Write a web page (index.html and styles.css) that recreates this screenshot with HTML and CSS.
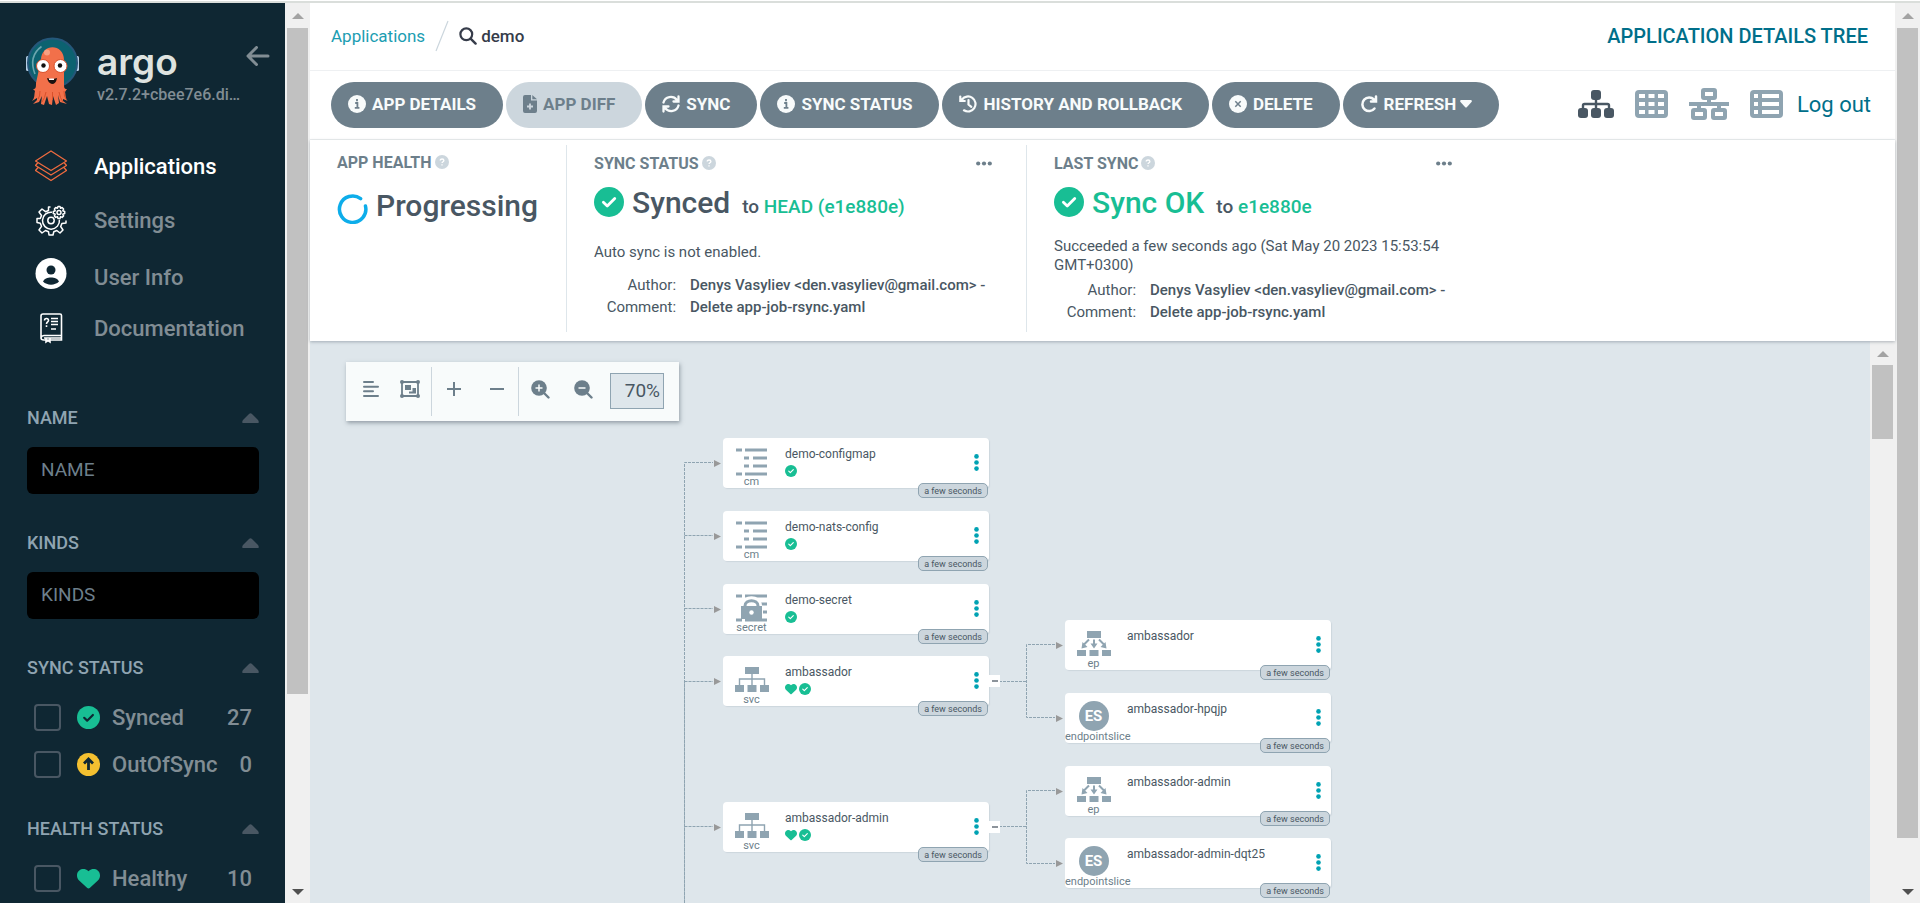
FILE: index.html
```html
<!DOCTYPE html>
<html lang="en">
<head>
<meta charset="utf-8">
<title>demo - Application Details Tree - Argo CD</title>
<link rel="stylesheet" href="styles.css">
</head>
<body>
<svg class="defs" aria-hidden="true">
  <symbol id="check" viewBox="0 0 512 512"><circle cx="256" cy="256" r="256" fill="#18be94"/><path d="M160 262l66 64 128-128" fill="none" stroke="var(--tick, #fff)" stroke-width="48" stroke-linecap="round" stroke-linejoin="round"/></symbol>
  <symbol id="heart" viewBox="0 0 512 512"><path fill="#18be94" d="M47.600 300.400l180.700 168.700c7.500 7 17.400 10.900 27.700 10.900s20.200-3.900 27.700-10.900l180.700-168.700c30.400-28.300 47.600-68 47.600-109.500v-5.800c0-69.900-50.500-129.500-119.400-141-45.600-7.600-92 7.300-124.600 39.900l-12 12-12-12c-32.600-32.600-79-47.500-124.600-39.900C50.500 55.600 0 115.200 0 185.100v5.800c0 41.500 17.200 81.200 47.600 109.500z"/></symbol>
  <symbol id="caret" viewBox="0 0 17 10"><path d="M1 10C0 10 0 8 1 7L7 1q1.500-1.400 3 0l6 6c1 1 1 3 0 3z" fill="currentColor"/></symbol>
  <symbol id="info" viewBox="0 0 18 18"><circle cx="9" cy="9" r="9" fill="currentColor"/><path d="M7.200 8h2.200v4.600M6.800 12.800h4.600M9 4v2.300" fill="none" stroke="#6d7f8b" stroke-width="1.800"/></symbol>
  <symbol id="help" viewBox="0 0 14 14"><circle cx="7" cy="7" r="7" fill="#ccd6dd"/><path d="M5.200 5.500c0-2 3.700-2 3.700 0 0 1.200-1.900 1.200-1.900 2.500M7 9.300v1.300" fill="none" stroke="#fff" stroke-width="1.300"/></symbol>
  <symbol id="dots" viewBox="0 0 16 5"><g fill="#6d7f8b"><circle cx="2.200" cy="2.500" r="2.100"/><circle cx="8" cy="2.500" r="2.100"/><circle cx="13.800" cy="2.500" r="2.100"/></g></symbol>
  <symbol id="kebab" viewBox="0 0 5 17"><g fill="#00a2b3"><circle cx="2.500" cy="2.400" r="2.300"/><circle cx="2.500" cy="8.500" r="2.300"/><circle cx="2.500" cy="14.600" r="2.300"/></g></symbol>
  <symbol id="cm" viewBox="0 0 34 28"><path d="M1 2h6M10 2h22M9 10h5M18 10h14M9 18h5M18 18h14M1 26h6M10 26h22" stroke="#8fa4b1" stroke-width="3"/></symbol>
  <symbol id="secret" viewBox="0 0 34 28"><path d="M1 2h6M10 2h22M26 10h6M28 18h4M1 26h6M10 26h22" stroke="#8fa4b1" stroke-width="3"/><path d="M9 13V12c0-9 15-9 15 0v1" fill="none" stroke="#fff" stroke-width="6"/><path d="M10 13V12c0-7 13-7 13 0v1" fill="none" stroke="#8fa4b1" stroke-width="3"/><path d="M6 12h21v13H6z" fill="#8fa4b1"/><circle cx="16.500" cy="18.500" r="2.200" fill="#fff"/></symbol>
  <symbol id="svc" viewBox="0 0 34 28"><g fill="#8fa4b1"><path d="M10 1h14v7H10zM0 19h9v7H0zM12.500 19h9v7h-9zM25 19h9v7h-9z"/><path d="M17 8v11M4.500 19v-6h25v6" fill="none" stroke="#8fa4b1" stroke-width="1.400"/></g></symbol>
  <symbol id="ep" viewBox="0 0 34 28"><g fill="#8fa4b1"><path d="M10 1h14v7H10zM0 20h9v6H0zM12.500 20h9v6h-9zM25 20h9v6h-9z"/><path d="M12 9.500l-5 5M17 9.500v5M22 9.500l5 5" stroke="#8fa4b1" stroke-width="2"/><path d="M4.500 18.500l1-6.500 5 5zM13.500 13.500h7L17 18.500zM29.500 18.500l-1-6.500-5 5z"/></g></symbol>
</svg>

<div class="app">
  <aside class="sidebar">
    <header class="brand">
      <svg class="mascot" viewBox="0 0 53 70" width="53" height="70" aria-hidden="true">
        <rect x="0" y="19" width="4" height="15" rx="1.500" fill="#b8cfe6"/><rect x="49" y="19" width="4" height="15" rx="1.500" fill="#b8cfe6"/>
        <circle cx="26.500" cy="26" r="24.500" fill="#0c6270" stroke="#25577a" stroke-width="2"/>
        <path d="M9 37C4 24 8 15 15.500 9.500" fill="none" stroke="#6ba5ae" stroke-width="1.600"/>
        <path fill="#f2704a" d="M15 23c0-17 23-17 23 0v22c0 6 0 7 3 7l-2 3c1 4 0 7 3 9l-5-2 0 2 4 3-7-2-2-7 1 8-3 2-3-9-1 9-3-1-2-8-3 9-3-1 1-8-3 6-6 2 4-4 0-2-5 3c3-3 2-6 3-10l-2-2c3 0 3-2 3-6z"/>
        <path d="M14 54q0 6-2 8M38 54q0 6 2 8M20 55q-1 6-4 10M33 55q1 6 4 10M26.500 55v8" stroke="#d9502a" stroke-width="1" fill="none"/>
        <ellipse cx="21" cy="15.500" rx="3" ry="3" fill="#f8a082"/>
        <circle cx="17" cy="29" r="6.500" fill="#fff" stroke="#d9502a"/><circle cx="34.500" cy="29" r="6.500" fill="#fff" stroke="#d9502a"/>
        <circle cx="17.500" cy="28.500" r="2.200" fill="#111"/><circle cx="34" cy="28.500" r="2.200" fill="#111"/>
        <path d="M21 41q5 2 10 0-1 6-5 6-4-1-5-6z" fill="#1a1210"/><path d="M23 41.500h5v1.500h-5z" fill="#fff"/>
      </svg>
      <div class="brand-text">
        <span class="wordmark">argo</span>
        <span class="version">v2.7.2+cbee7e6.di…</span>
      </div>
      <button class="collapse" aria-label="Collapse sidebar"><svg viewBox="0 0 24 20" width="24" height="20"><path d="M10.500 1.500L2 10l8.500 8.500M2.500 10H22" fill="none" stroke="currentColor" stroke-width="3" stroke-linecap="round" stroke-linejoin="round"/></svg></button>
    </header>
    <nav class="menu">
      <a class="menu-item active" href="#"><svg viewBox="0 0 32 32" width="32" height="32" fill="none" stroke="#ef6b3f" stroke-width="1.300" stroke-linejoin="round"><path d="M16 1l15.500 10L16 20.500.500 11zM3 12.500L.500 15.500 16 25l15.500-9.500-2.500-3M3 17.500l-2.500 3L16 30.500l15.500-10-2.500-3"/></svg>Applications</a>
      <a class="menu-item" href="#"><svg viewBox="0 0 32 32" width="32" height="32" fill="none" stroke="#fff" stroke-width="1.500" stroke-linejoin="round"><path d="M15.500 3h-2v3.500l-3 1.200L7 5 4 8l2.500 3.500-1.200 3H2v4l3.300.800 1.200 3L4 26l3 3 3.500-2.500 3 1.200.5 3.300h4l.8-3.300 3-1.200L25 29l3-3-2.300-3.500 1.200-3 4.100-.5v-2.500"/><path d="M17 8.200a8.500 8.500 0 1 0 7.400 7.400"/><circle cx="16" cy="16.500" r="3.200"/><circle cx="24" cy="8.500" r="2"/><path d="M23 2.500h2l.6 1.800 1.500-.8 1.500 1.500-.8 1.700 1.900.8v2l-1.900.7.800 1.700-1.500 1.500-1.500-.8-.6 1.900h-2l-.6-1.900-1.700.8-1.300-1.500.8-1.700-1.900-.7v-2l1.900-.8-.8-1.700 1.300-1.500 1.700.8z"/></svg>Settings</a>
      <a class="menu-item user" href="#"><svg viewBox="0 0 32 32" width="32" height="32"><circle cx="16" cy="15.500" r="15.500" fill="#fff"/><circle cx="16" cy="12" r="4.500" fill="#0f2733"/><path d="M8 23.500c2-5.500 14-5.500 16 0-4 4.200-12 4.200-16 0z" fill="#0f2733"/></svg>User Info</a>
      <a class="menu-item docs" href="#"><svg viewBox="0 0 32 32" width="32" height="32" fill="none" stroke="#fff" stroke-width="1.600"><path d="M6 25.500V4q0-2 2-2h17q1.500 0 1.500 1.500v20H9q-3 .5-3 2.500 0 2 3 2h17.500v-4.500M11 26v4l2-1.500L15 30v-4M9 26h17"/><path d="M9.500 8.500c0-3 4-2.500 4 0 0 1.500-2 1.500-2 3.500m0 1.200V15M16 6.500h7M16 9.500h7M16 12.500h7M16 17h5"/></svg>Documentation</a>
    </nav>
    <section class="filter">
      <h2><label for="f-name">NAME</label><svg width="17" height="10"><use href="#caret"/></svg></h2>
      <input class="filter-input" id="f-name" type="text" placeholder="NAME">
    </section>
    <section class="filter">
      <h2><label for="f-kinds">KINDS</label><svg width="17" height="10"><use href="#caret"/></svg></h2>
      <input class="filter-input" id="f-kinds" type="text" placeholder="KINDS">
    </section>
    <section class="filter checks">
      <h2>SYNC STATUS<svg width="17" height="10"><use href="#caret"/></svg></h2>
      <label class="check-row"><input type="checkbox"><svg class="dark-tick" width="23" height="23"><use href="#check"/></svg><span>Synced</span><b>27</b></label>
      <label class="check-row"><input type="checkbox"><svg viewBox="0 0 23 23" width="23" height="23"><circle cx="11.500" cy="11.500" r="11.500" fill="#f4c030"/><path d="M11.500 17V7M7 10.500L11.500 6l4.500 4.500" fill="none" stroke="#0f2733" stroke-width="2.800"/></svg><span>OutOfSync</span><b>0</b></label>
    </section>
    <section class="filter checks health">
      <h2>HEALTH STATUS<svg width="17" height="10"><use href="#caret"/></svg></h2>
      <label class="check-row"><input type="checkbox"><svg width="23" height="23"><use href="#heart"/></svg><span>Healthy</span><b>10</b></label>
    </section>
  </aside>
  <div class="bar left-bar"><i class="up"></i><div class="thumb"></div><i class="down"></i></div>

  <main class="page">
    <div class="topbar">
      <nav class="crumbs"><a href="#">Applications</a><svg viewBox="0 0 14 32" width="14" height="32"><path d="M1 31L13 1" stroke="#ccd6dd" stroke-width="1.200"/></svg><svg viewBox="0 0 18 18" width="18" height="18"><circle cx="7.300" cy="7.300" r="5.900" fill="none" stroke="#363c4a" stroke-width="2.200"/><path d="M11.600 11.600l5 5" stroke="#363c4a" stroke-width="2.400" stroke-linecap="round"/></svg><span>demo</span></nav>
      <span class="page-title">APPLICATION DETAILS TREE</span>
    </div>
    <div class="actions">
      <button class="pill"><svg width="18" height="18"><use href="#info"/></svg>APP DETAILS</button>
      <button class="pill off" disabled><svg viewBox="0 0 14 18" width="14" height="18"><path d="M2 0h6v5.500h6V16q0 2-2 2H2q-2 0-2-2V2Q0 0 2 0z" fill="currentColor"/><path d="M9.300 0v4.300H14z" fill="currentColor"/><path d="M7 8.500v6M4 11.500h6" stroke="#ccd6dd" stroke-width="1.800"/></svg>APP DIFF</button>
      <button class="pill"><svg viewBox="0 0 18 18" width="18" height="18" fill="none" stroke="currentColor" stroke-width="2.300" stroke-linecap="round"><path d="M1.500 7.500C3 1.500 11 0 15 5M16.500 10.500C15 16.500 7 18 3 13M16.500 1.500v5h-5M1.500 16.500v-5h5"/></svg>SYNC</button>
      <button class="pill"><svg width="18" height="18"><use href="#info"/></svg>SYNC STATUS</button>
      <button class="pill"><svg viewBox="0 0 18 18" width="18" height="18" fill="none" stroke="currentColor" stroke-width="2.200" stroke-linecap="round"><path d="M3 4.500A7.500 7.500 0 1 1 5 15.300M1.300 1.500v4.500h4.500M9.500 5v4.500l2.800 2.300"/></svg>HISTORY AND ROLLBACK</button>
      <button class="pill"><svg viewBox="0 0 18 18" width="18" height="18"><circle cx="9" cy="9" r="9" fill="currentColor"/><path d="M6.300 6.300l5.400 5.400M11.700 6.300l-5.400 5.400" stroke="#6d7f8b" stroke-width="1.500"/></svg>DELETE</button>
      <button class="pill refresh"><svg viewBox="0 0 18 18" width="18" height="18" fill="none" stroke="currentColor" stroke-width="2.500" stroke-linecap="round"><path d="M14.500 13.500A6.800 6.800 0 1 1 14 4.500l1.500 1.500M16 1.500v5h-5"/></svg>REFRESH<svg class="drop" viewBox="0 0 12 8" width="12" height="8"><path d="M1 0h10q1.500.5.500 2L7 7Q6 8 5 7L.500 2Q-.500.500 1 0z" fill="currentColor"/></svg></button>
      <div class="views">
        <a href="#" aria-label="Tree"><svg viewBox="0 0 36 28" width="36" height="28" fill="#495763"><rect x="13" y="0" width="10" height="10" rx="3"/><rect x="0" y="18" width="10" height="10" rx="3"/><rect x="13" y="18" width="10" height="10" rx="3"/><rect x="26" y="18" width="10" height="10" rx="3"/><path d="M18 9v10M5 19v-3.500q0-1.500 1.500-1.500h23q1.500 0 1.500 1.500V19" fill="none" stroke="#495763" stroke-width="2.400"/></svg></a>
        <a href="#" aria-label="Pods"><svg viewBox="0 0 33 28" width="33" height="28"><rect width="33" height="28" rx="4" fill="#8fa4b1"/><path d="M4 4h6v4H4zM13.500 4h6v4h-6zM23 4h6v4h-6zM4 12h6v4H4zM13.500 12h6v4h-6zM23 12h6v4h-6zM4 20h6v4H4zM13.500 20h6v4h-6zM23 20h6v4h-6z" fill="#fff"/></svg></a>
        <a href="#" aria-label="Network"><svg viewBox="0 0 40 32" width="40" height="32" fill="none" stroke="#8fa4b1" stroke-width="4"><path d="M0 16h40M20 11v5M10 16v5M30 16v5"/><rect x="14" y="2" width="12" height="8" rx="1"/><rect x="4" y="22" width="12" height="8" rx="1"/><rect x="24" y="22" width="12" height="8" rx="1"/></svg></a>
        <a href="#" aria-label="List"><svg viewBox="0 0 33 28" width="33" height="28"><rect width="33" height="28" rx="4" fill="#8fa4b1"/><path d="M4 4h4v4H4zM12 4h17v4H12zM4 12h4v4H4zM12 12h17v4H12zM4 20h4v4H4zM12 20h17v4H12z" fill="#fff"/></svg></a>
        <a class="logout" href="#">Log out</a>
      </div>
    </div>
    <div class="status">
      <section class="panel">
        <h3>APP HEALTH<svg width="14" height="14"><use href="#help"/></svg></h3>
        <div class="state low"><svg viewBox="0 0 31 31" width="31" height="31"><path d="M21 4A13.200 13.200 0 1 0 27.500 10" fill="none" stroke="#0dadea" stroke-width="3.500" stroke-linecap="round" transform="rotate(14 15.500 15.500)"/></svg><strong>Progressing</strong></div>
      </section>
      <section class="panel wide">
        <h3>SYNC STATUS<svg width="14" height="14"><use href="#help"/></svg><button class="more" aria-label="More"><svg width="16" height="5"><use href="#dots"/></svg></button></h3>
        <div class="state"><svg width="30" height="30"><use href="#check"/></svg><strong>Synced</strong><span>to <a href="#">HEAD (e1e880e)</a></span></div>
        <p class="note spaced">Auto sync is not enabled.</p>
        <dl><dt>Author:</dt><dd>Denys Vasyliev &lt;den.vasyliev@gmail.com&gt; -</dd><dt>Comment:</dt><dd>Delete app-job-rsync.yaml</dd></dl>
      </section>
      <section class="panel wide">
        <h3>LAST SYNC<svg width="14" height="14"><use href="#help"/></svg><button class="more" aria-label="More"><svg width="16" height="5"><use href="#dots"/></svg></button></h3>
        <div class="state"><svg width="30" height="30"><use href="#check"/></svg><strong class="ok">Sync OK</strong><span>to <a href="#">e1e880e</a></span></div>
        <p class="note">Succeeded a few seconds ago (Sat May 20 2023 15:53:54 GMT+0300)</p>
        <dl><dt>Author:</dt><dd>Denys Vasyliev &lt;den.vasyliev@gmail.com&gt; -</dd><dt>Comment:</dt><dd>Delete app-job-rsync.yaml</dd></dl>
      </section>
    </div>
    <div class="tree">
      <div class="canvas">
        <div class="tools">
          <div class="tool-group"><button aria-label="Align"><svg viewBox="0 0 16 16" width="16" height="16"><path d="M1 1h9M1 5.700h14M1 10.300h9M1 15h14" stroke="currentColor" stroke-width="2" stroke-linecap="round"/></svg></button><button aria-label="Group nodes"><svg viewBox="0 0 20 18" width="20" height="18" fill="currentColor"><path d="M2 2h16v14H2z" fill="none" stroke="currentColor" stroke-width="1.800"/><circle cx="2" cy="2" r="2"/><circle cx="18" cy="2" r="2"/><circle cx="2" cy="16" r="2"/><circle cx="18" cy="16" r="2"/><path d="M5 5h6v5H5zM12.500 8H16v5.500H9V11.500h3.500z"/></svg></button></div>
          <div class="tool-group"><button aria-label="Expand"><svg viewBox="0 0 14 14" width="14" height="14"><path d="M7 0v14M0 7h14" stroke="currentColor" stroke-width="2"/></svg></button><button aria-label="Collapse"><svg viewBox="0 0 14 14" width="14" height="14"><path d="M0 7h14" stroke="currentColor" stroke-width="2"/></svg></button></div>
          <div class="tool-group zoom"><button aria-label="Zoom in"><svg viewBox="0 0 19 19" width="19" height="19"><circle cx="8" cy="8" r="7.800" fill="currentColor"/><path d="M12 12l5.500 5.500" stroke="currentColor" stroke-width="2.400" stroke-linecap="round"/><path d="M8 4.500v7M4.500 8h7" stroke="#f8fbfb" stroke-width="1.500"/></svg></button><button aria-label="Zoom out"><svg viewBox="0 0 19 19" width="19" height="19"><circle cx="8" cy="8" r="7.800" fill="currentColor"/><path d="M12 12l5.500 5.500" stroke="currentColor" stroke-width="2.400" stroke-linecap="round"/><path d="M4.500 8h7" stroke="#f8fbfb" stroke-width="1.500"/></svg></button><input type="text" value="70%" aria-label="Zoom level"></div>
        </div>
        <svg class="edges" width="800" height="562" aria-hidden="true">
          <g fill="none" stroke="#8fa4b1" stroke-dasharray="3 1"><path d="M374.500 562V121.500H403M374.500 194.500H403M374.500 267.500H403M374.500 340.500H403M374.500 485.500H403"/><path d="M374.500 340V562" stroke-dasharray="none" stroke-opacity=".7"/><path d="M689 340.500h27.500M745 303.500h-28.500v73H745M689 485.500h27.500M745 449.500h-28.500v73H745"/></g>
          <path fill="#999" d="M404 119l7 3.500-7 3.500zM404 192l7 3.500-7 3.500zM404 265l7 3.500-7 3.500zM404 337l7 3.500-7 3.500zM404 483l7 3.500-7 3.500zM746 301l7 3.500-7 3.500zM746 374l7 3.500-7 3.500zM746 447l7 3.500-7 3.500zM746 519l7 3.500-7 3.500z"/>
        </svg>
        <article class="node c1 r1"><div class="kind"><svg width="34" height="28"><use href="#cm"/></svg>cm</div><div class="body">demo-configmap<div><svg width="12" height="12"><use href="#check"/></svg></div></div><button aria-label="Menu"><svg width="5" height="17"><use href="#kebab"/></svg></button><span class="age">a few seconds</span></article>
        <article class="node c1 r2"><div class="kind"><svg width="34" height="28"><use href="#cm"/></svg>cm</div><div class="body">demo-nats-config<div><svg width="12" height="12"><use href="#check"/></svg></div></div><button aria-label="Menu"><svg width="5" height="17"><use href="#kebab"/></svg></button><span class="age">a few seconds</span></article>
        <article class="node c1 r3"><div class="kind"><svg width="34" height="28"><use href="#secret"/></svg>secret</div><div class="body">demo-secret<div><svg width="12" height="12"><use href="#check"/></svg></div></div><button aria-label="Menu"><svg width="5" height="17"><use href="#kebab"/></svg></button><span class="age">a few seconds</span></article>
        <article class="node c1 r4"><div class="kind"><svg width="34" height="28"><use href="#svc"/></svg>svc</div><div class="body">ambassador<div><svg width="12" height="12"><use href="#heart"/></svg><svg width="12" height="12"><use href="#check"/></svg></div></div><button aria-label="Menu"><svg width="5" height="17"><use href="#kebab"/></svg></button><span class="age">a few seconds</span><i class="fold"></i></article>
        <article class="node c1 r6"><div class="kind"><svg width="34" height="28"><use href="#svc"/></svg>svc</div><div class="body">ambassador-admin<div><svg width="12" height="12"><use href="#heart"/></svg><svg width="12" height="12"><use href="#check"/></svg></div></div><button aria-label="Menu"><svg width="5" height="17"><use href="#kebab"/></svg></button><span class="age">a few seconds</span><i class="fold"></i></article>
        <article class="node c2 s1"><div class="kind"><svg width="34" height="28"><use href="#ep"/></svg>ep</div><div class="body">ambassador</div><button aria-label="Menu"><svg width="5" height="17"><use href="#kebab"/></svg></button><span class="age">a few seconds</span></article>
        <article class="node c2 s2"><div class="kind"><span class="disc">ES</span>endpointslice</div><div class="body">ambassador-hpqjp</div><button aria-label="Menu"><svg width="5" height="17"><use href="#kebab"/></svg></button><span class="age">a few seconds</span></article>
        <article class="node c2 s3"><div class="kind"><svg width="34" height="28"><use href="#ep"/></svg>ep</div><div class="body">ambassador-admin</div><button aria-label="Menu"><svg width="5" height="17"><use href="#kebab"/></svg></button><span class="age">a few seconds</span></article>
        <article class="node c2 s4"><div class="kind"><span class="disc">ES</span>endpointslice</div><div class="body">ambassador-admin-dqt25</div><button aria-label="Menu"><svg width="5" height="17"><use href="#kebab"/></svg></button><span class="age">a few seconds</span></article>
      </div>
      <div class="bar tree-bar"><i class="up"></i><div class="thumb"></div></div>
    </div>
  </main>
  <div class="bar page-bar"><i class="up"></i><div class="thumb"></div><i class="down"></i></div>
</div>
</body>
</html>
```

FILE: styles.css
```css
* { box-sizing: border-box; }
body { margin: 0; font-family: Roboto, sans-serif; font-size: 16px; color: #495763; background: #fff; }
button, input { font: inherit; color: inherit; }
button { border: 0; padding: 0; background: none; display: flex; align-items: center; }
a { text-decoration: none; color: inherit; }
h2, h3, p, dl, dd { margin: 0; }
svg { display: block; flex: none; }
.defs { position: absolute; width: 0; height: 0; }

.app { height: 100vh; overflow: hidden; display: grid; grid-template-columns: 285px 25px minmax(0, 1fr) 25px; padding-top: 3px; background: linear-gradient(#fff 1px, #dadedb 1px, #dadedb 3px, #fff 3px); }

/* scroll bars */
.bar { display: flex; flex-direction: column; align-items: center; background: #f0f0f0; padding: 10px 2px 8px; overflow: hidden; }
.bar i { flex: none; border: 6px solid transparent; border-top-width: 0; border-bottom-color: #a3a3a3; }
.bar .down { margin-top: auto; border-top: 6px solid #505050; border-bottom-width: 0; }
.bar .thumb { flex: none; width: 21px; height: 666px; margin-top: 9px; background: #c1c1c1; }
.page-bar .thumb { height: 810px; }
.tree-bar .thumb { height: 74px; margin-top: 8px; }

/* sidebar */
.sidebar { background: #0f2733; color: #818d94; overflow: hidden; padding: 34px 26px 0; font-weight: 500; }
.brand { display: flex; align-items: flex-start; }
.brand-text { flex: none; margin-left: 18px; width: 149px; display: flex; flex-direction: column; }
.wordmark { font: 600 37px/49px Inter, sans-serif; color: #dee3e0; }
.version { font-size: 16px; line-height: 18px; white-space: nowrap; }
.collapse { margin: 9px 0 0; color: #818d94; }
.menu { display: flex; flex-direction: column; margin: 32px 0 0 9px; }
.menu-item { display: flex; align-items: center; gap: 27px; height: 54px; font-size: 22px; }
.menu-item.user { padding-top: 2px; height: 58px; }
.menu-item.user svg { margin-bottom: 6px; }
.menu-item.docs { height: 46px; }
.menu-item.active { color: #fff; }
.filter { margin-left: 1px; padding-bottom: 34px; }
.menu + .filter { margin-top: 52px; }
.filter h2 { display: flex; justify-content: space-between; align-items: center; height: 30px; margin-bottom: 14px; font-size: 18px; line-height: 30px; font-weight: 500; color: #8fa4b1; }
.filter h2 svg { color: #495763; }
.filter-input { display: block; width: 100%; height: 47px; border: 0; border-radius: 6px; background: #000; padding: 0 14px 2px; font-size: 19px; font-weight: 400; }
.filter-input::placeholder { color: #6d7f8b; }
.filter.checks { padding-bottom: 26px; }
.check-row { display: flex; align-items: center; height: 47px; padding: 0 7px; font-size: 22px; }
.check-row input { appearance: none; width: 27px; height: 27px; margin: 0 16px 0 0; border: 2px solid #495763; border-radius: 4px; }
.check-row span { margin-left: 12px; flex: 1; }
.check-row b { font-weight: 500; }
.filter.checks h2 { margin-bottom: 11px; }
.dark-tick { --tick: #0f2733; }

/* page */
.page { display: flex; flex-direction: column; min-width: 0; height: calc(100vh - 3px); }
.topbar, .actions { display: flex; align-items: center; padding: 0 24px 0 21px; border-bottom: 1px solid #eef0f2; flex: none; }
.topbar { height: 68px; justify-content: space-between; padding-bottom: 2px; }
.crumbs { display: flex; align-items: center; font-size: 17px; }
.crumbs a { color: #1b9db2; }
.crumbs svg { margin-left: 10px; }
.crumbs span { margin-left: 4px; color: #363c4a; font-weight: 500; }
.page-title { font-size: 20px; font-weight: 500; color: #006f8a; padding-right: 3px; }
.actions { height: 69px; gap: 3px; }
.pill { height: 46px; padding: 0 27px 3px 17px; gap: 6px; border-radius: 23px; background: #6d7f8b; color: #f8fbfb; font-size: 17px; font-weight: 700; white-space: nowrap; }
.pill.off { background: #ccd6dd; color: #6d7f8b; }
.pill .drop { margin-left: -2px; }
.views { display: flex; align-items: center; margin-left: auto; gap: 21px; padding-bottom: 2px; }
.logout { font-size: 22px; color: #006f8a; margin-left: -7px; }

.status { display: flex; flex: none; height: 201px; padding: 5px 0 9px 27px; position: relative; box-shadow: 0 1px 3px rgba(73, 87, 99, .4); z-index: 1; }
.panel { padding: 7px 28px 0 0; }
.panel.wide { width: 460px; padding: 8px 27px 0; border-left: 1px solid #dee6eb; }
.panel h3 { display: flex; align-items: center; gap: 3px; height: 20px; font-size: 16px; font-weight: 700; color: #6d7f8b; }
.more { margin: 0 7px 0 auto; }
.state { display: flex; align-items: baseline; margin-top: 10px; line-height: 40px; height: 38px; white-space: nowrap; }
.state svg { align-self: center; }
.state.low { margin-top: 14px; }
.state.low svg { margin-top: 6px; }
.state strong { font-size: 30px; font-weight: 500; margin-left: 8px; }
.state span { font-size: 19px; margin-left: 12px; font-weight: 500; }
.state a, .state .ok { color: #18be94; }
.note { line-height: 19px; margin-top: 16px; width: 395px; font-size: 15px; }
.note.spaced { margin: 22px 0 12px; }
.panel dl { display: grid; grid-template-columns: 82px 1fr; column-gap: 14px; font-size: 15px; line-height: 22px; margin-top: 4px; white-space: nowrap; }
.panel dt { text-align: right; }
.panel dd { font-weight: 500; }

/* resource tree */
.tree { flex: 1; min-height: 0; display: flex; }
.canvas { flex: 1; position: relative; overflow: hidden; background: #dee6eb; padding: 21px 36px; }
.tree-bar { width: 25px; flex: none; background: #f0f0f0; }
.tools { display: inline-flex; height: 59px; padding: 5px 15px 5px 1px; background: #f8fbfb; box-shadow: 1px 2px 4px rgba(73, 87, 99, .5); color: #6d7f8b; }
.tool-group { display: flex; align-items: center; gap: 21px; padding: 0 11px 5px 16px; }
.tool-group + .tool-group { border-left: 1px solid #ccd6dd; gap: 29px; padding: 0 14px 5px 15px; }
.tool-group + .tool-group.zoom { gap: 24px; padding: 0 0 5px 12px; }
.tool-group input { width: 54px; height: 36px; margin: 3px 0 0 -7px; padding: 0 3px; text-align: right; font-size: 19px; color: #495763; border: 1px solid #8fa4b1; border-radius: 0; background: #dee6eb; }

.edges { position: absolute; left: 0; top: 0; }
.node { position: absolute; width: 266px; height: 50px; display: flex; background: #fff; border-radius: 4px; box-shadow: 1px 1px 1px #ccd6dd; font-size: 12px; }
.c1 { left: 413px; }
.c2 { left: 755px; }
.r1 { top: 97px; }
.r2 { top: 170px; }
.r3 { top: 243px; }
.r4 { top: 315px; }
.r6 { top: 461px; }
.s1 { top: 279px; }
.s2 { top: 352px; }
.s3 { top: 425px; }
.s4 { top: 497px; }
.kind { width: 57px; padding-top: 10px; display: flex; flex-direction: column; align-items: safe center; font-size: 11px; line-height: 12px; color: #6d7f8b; }
.disc { width: 30px; height: 30px; margin: -2px auto 0; border-radius: 50%; background: #8fa4b1; color: #fff; font-size: 15px; font-weight: 700; line-height: 31px; text-align: center; }
.body { flex: 1; padding: 9px 0 0 5px; line-height: 15px; }
.body div { display: flex; gap: 2px; margin-top: 3px; }
.node button { margin: 0 10px 2px 0; }
.age { position: absolute; right: 1px; top: 45px; height: 15px; padding: 0 5px; border: 1px solid #8fa4b1; border-radius: 5px; background: #ccd6dd; font-size: 9px; line-height: 14px; color: #495763; }
.fold { position: absolute; left: 266px; top: 19px; width: 11px; height: 12px; background: linear-gradient(#8d949b, #8d949b) center / 6px 2px no-repeat #fff; }
```
